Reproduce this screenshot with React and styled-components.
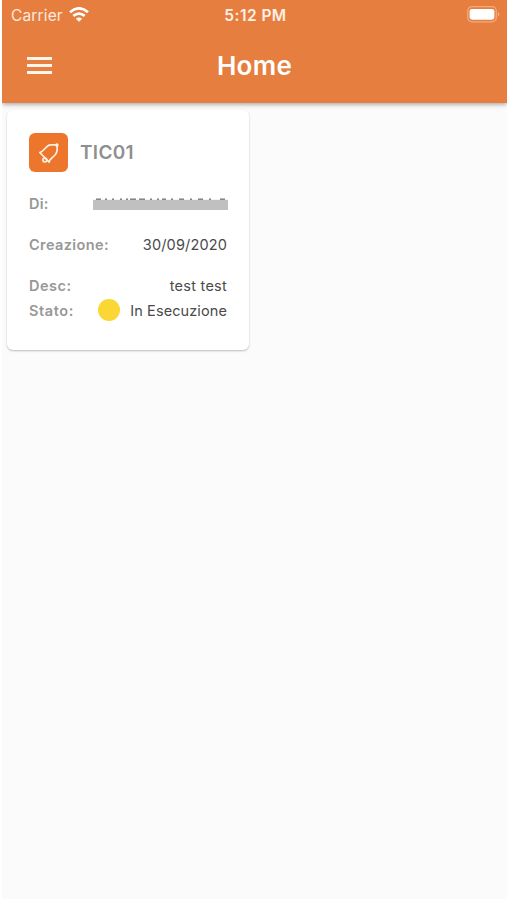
import React, { Component } from 'react'
import styled, { createGlobalStyle } from 'styled-components'

const ticket = {
    title: 'TIC01',
    date: '30/09/2020',
    desc: 'test test',
    status: 'In Esecuzione'
}

const WifiIcon = () => (
    <svg width="20" height="15" viewBox="0 0 20 15">
        <path d="M10 14.4 L7.2 11.8 Q10 9.6 12.8 11.8 Z" fill="#fff" stroke="#fff" strokeWidth="0.6" />
        <path d="M4.3 8.9 Q10 4.3 15.7 8.9" fill="none" stroke="#fff" strokeWidth="2.7" />
        <path d="M1 5.2 Q10 -2.4 19 5.2" fill="none" stroke="#fff" strokeWidth="2.8" />
    </svg>
)

const BatteryIcon = () => (
    <svg width="33" height="17" viewBox="0 0 33 17">
        <rect x="0.7" y="0.7" width="28.6" height="15.2" rx="4.4" fill="none" stroke="#f0ab80" strokeWidth="1.3" />
        <rect x="2.6" y="2.9" width="24.8" height="10.8" rx="2.4" fill="#fff" />
        <path d="M30.9 5.8 Q32.4 6.6 32.4 8.3 Q32.4 10 30.9 10.8 Z" fill="#f0ab80" />
    </svg>
)

const BellIcon = () => (
    <svg width="39" height="39" viewBox="0 0 38 38" fill="none" stroke="#fff0e2" strokeWidth="1.6" strokeLinejoin="round" strokeLinecap="round">
        <path d="M10.5 19 L12.7 18 L18 12.8 Q20 11.2 22.6 11.6 L27.4 11.4 L27.4 17 Q27 19.4 25.6 21.2 L20.4 26.2 L19.6 28.4 Z" />
        <circle cx="15.4" cy="26.4" r="1.9" />
        <circle cx="27.2" cy="11.6" r="0.9" />
    </svg>
)

// the name is covered, only the upper edge of some letters stays visible
const HiddenName = () => (
    <CoveredText width="135" height="12" viewBox="0 0 135 12">
        <path
            d="M3 1.3h5 M12 1.3h2 M19 1.3h2 M27 1.3h2 M33 1.3h2 M37 1.3h6 M46 1.3h6 M57 1.3h2 M64 1.3h2 M69 1.3h4 M78 1.3h2 M86 1.3h5 M97 1.3h2 M105 1.3h5 M116 1.3h2 M127 1.3h5"
            stroke="#777"
            strokeWidth="1.6"
        />
        <rect x="0" y="1.8" width="135" height="10.2" fill="#c0c0c0" />
    </CoveredText>
)

class App extends Component {
    render() {
        return (
            <Screen>
                <GlobalStyle />
                <Header>
                    <StatusBar>
                        <Carrier>Carrier <WifiIcon /></Carrier>
                        <Clock>5:12 PM</Clock>
                        <Battery><BatteryIcon /></Battery>
                    </StatusBar>
                    <NavBar>
                        <MenuButton aria-label="Menu">
                            <span />
                            <span />
                            <span />
                        </MenuButton>
                        <PageTitle>Home</PageTitle>
                    </NavBar>
                </Header>
                <Content>
                    <Card>
                        <CardHead>
                            <IconBox><BellIcon /></IconBox>
                            <CardTitle>{ticket.title}</CardTitle>
                        </CardHead>
                        <Row $gap={16}>
                            <Label $spacing={0.3}>Di:</Label>
                            <HiddenName />
                        </Row>
                        <Row $gap={15.5}>
                            <Label $spacing={0.4}>Creazione:</Label>
                            <Value $spacing={0.15}>{ticket.date}</Value>
                        </Row>
                        <Row>
                            <Label $spacing={0.5}>Desc:</Label>
                            <Value $spacing={0.25}>{ticket.desc}</Value>
                        </Row>
                        <Row>
                            <Label $spacing={0.6}>Stato:</Label>
                            <Status>
                                <Dot />
                                <Value $spacing={0.1}>{ticket.status}</Value>
                            </Status>
                        </Row>
                    </Card>
                </Content>
            </Screen>
        )
    }
}

const GlobalStyle = createGlobalStyle`
  body {
    margin: 0;
    background-color: #fff;
    font-family: Inter, "Liberation Sans", sans-serif;
  }
  * {
    box-sizing: border-box;
  }
  svg {
    display: block;
    flex-shrink: 0;
  }
`
const Screen = styled.div`
  display: flex;
  flex-direction: column;
  height: 899px;
  margin: 0 0 1px 2px;
  background-color: #fbfbfb;
`
const Header = styled.header`
  height: 103px;
  background-color: #e67e3f;
  color: #fff;
  box-shadow: 0 1px 5px rgba(0, 0, 0, 0.4);
  clip-path: inset(0 0 -10px 0);
`
const StatusBar = styled.div`
  display: grid;
  grid-template-columns: 1fr auto 1fr;
  align-items: center;
  height: 30px;
  padding: 0 7px 0 9px;
`
const Carrier = styled.div`
  display: flex;
  align-items: center;
  gap: 6px;
  font-size: 15.5px;
  letter-spacing: 0.15px;
  color: #fdeadd;
  svg {
    margin-bottom: 2px;
  }
`
const Clock = styled.div`
  font-size: 15.5px;
  font-weight: 600;
  letter-spacing: 0.45px;
  color: #fff0e6;
`
const Battery = styled.div`
  display: flex;
  justify-content: flex-end;
  padding-bottom: 1px;
`
const NavBar = styled.div`
  display: grid;
  grid-template-columns: 1fr auto 1fr;
  align-items: center;
  height: 71px;
  padding: 0 25px;
`
const MenuButton = styled.div`
  display: flex;
  flex-direction: column;
  gap: 4px;
  span {
    width: 25px;
    height: 3px;
    background-color: #fff5ec;
  }
`
const PageTitle = styled.h1`
  margin: 0;
  font-size: 26px;
  line-height: 32px;
  font-weight: 600;
  letter-spacing: 0.3px;
`
const Content = styled.main`
  padding: 7px 5px;
`
const Card = styled.div`
  width: 242px;
  height: 240px;
  padding: 23px 22px 0;
  background-color: #fff;
  border-radius: 6px;
  box-shadow: 0 1px 2px rgba(0, 0, 0, 0.25);
`
const CardHead = styled.div`
  display: flex;
  align-items: center;
  margin-bottom: 19px;
`
const IconBox = styled.div`
  width: 39px;
  height: 39px;
  border-radius: 6px;
  background-color: #ed762d;
`
const CardTitle = styled.h2`
  margin: 0 0 0 12px;
  font-size: 19px;
  font-weight: 600;
  letter-spacing: 0.3px;
  color: #8f8f8f;
`
const Row = styled.div`
  display: flex;
  justify-content: space-between;
  align-items: center;
  height: 25px;
  margin-bottom: ${props => props.$gap || 0}px;
`
const Label = styled.div`
  font-size: 14.5px;
  font-weight: 600;
  letter-spacing: ${props => props.$spacing}px;
  color: #979797;
`
const Value = styled.div`
  font-size: 14.5px;
  letter-spacing: ${props => props.$spacing}px;
  color: #4a4a4a;
`
const CoveredText = styled.svg`
  margin-right: -1px;
`
const Status = styled.div`
  display: flex;
  align-items: center;
  gap: 10px;
`
const Dot = styled.div`
  width: 22px;
  height: 22px;
  border-radius: 50%;
  background-color: #fad735;
`

export default App
